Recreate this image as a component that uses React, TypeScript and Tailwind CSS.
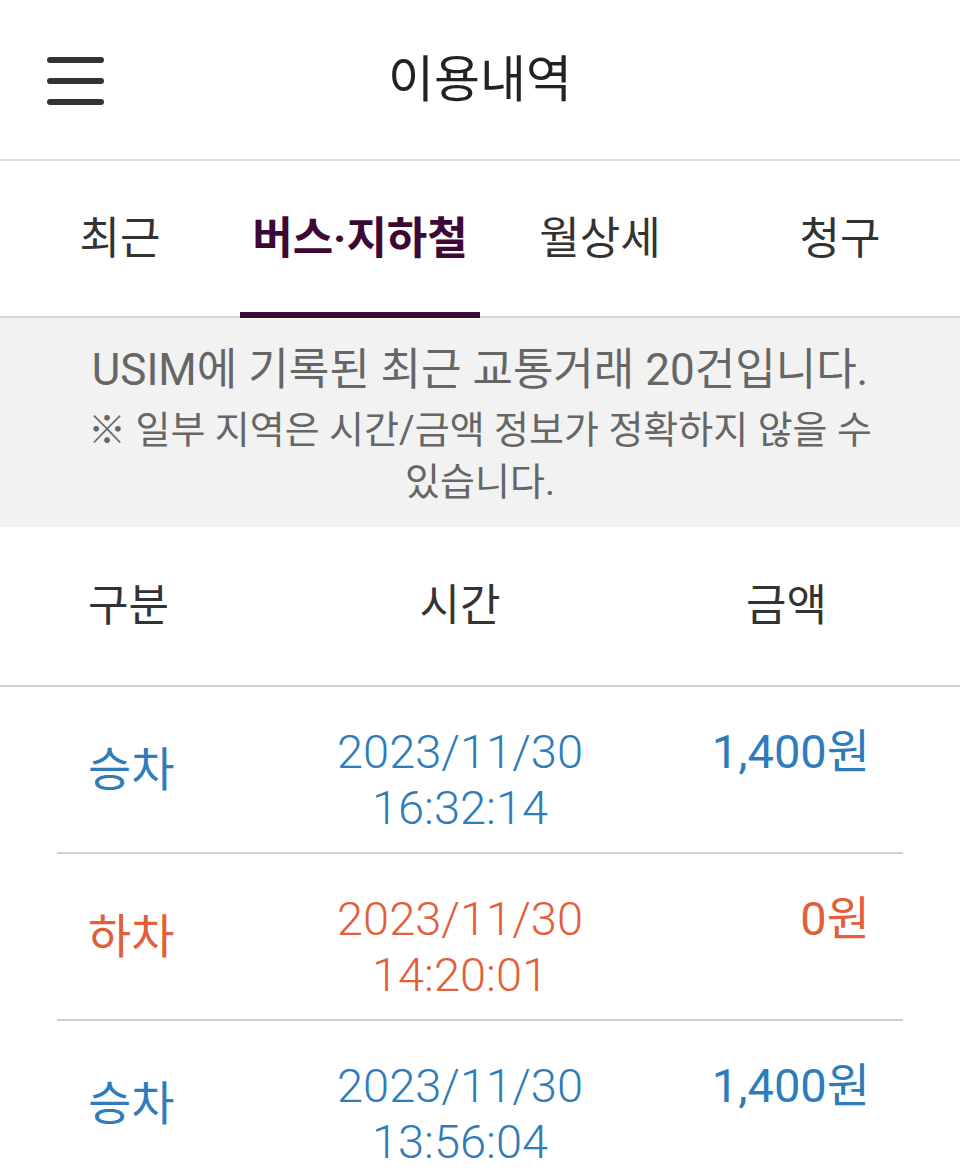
import React from "react";

type Ride = {
    kind: string;
    date: string;
    time: string;
    amount: string;
    tone: "board" | "alight";
};

const rides: Ride[] = [
    { kind: "승차", date: "2023/11/30", time: "16:32:14", amount: "1,400원", tone: "board" },
    { kind: "하차", date: "2023/11/30", time: "14:20:01", amount: "0원", tone: "alight" },
    { kind: "승차", date: "2023/11/30", time: "13:56:04", amount: "1,400원", tone: "board" },
];

const tabs = ["최근", "버스·지하철", "월상세", "청구"];

function Header() {
    return (
        <header className="relative flex h-[161px] items-center justify-center border-b-2 border-[#dcdcdc]">
            <button className="absolute left-[47px] top-[57px] flex w-[57px] flex-col gap-[15px]">
                <span className="h-[6px] w-full rounded-full bg-[#333]" />
                <span className="h-[6px] w-full rounded-full bg-[#333]" />
                <span className="h-[6px] w-full rounded-full bg-[#333]" />
            </button>
            <h1 className="text-[50px] leading-none text-[#222]">이용내역</h1>
        </header>
    );
}

function Tabs() {
    return (
        <nav className="grid h-[157px] grid-cols-4 border-b-2 border-[#d4d4d4]">
            {tabs.map((tab, i) => (
                <div key={tab} className="relative flex items-center justify-center">
                    <span
                        className={
                            i === 1
                                ? "text-[44px] font-bold text-[#3d0836]"
                                : "text-[44px] text-[#333]"
                        }
                    >
                        {tab}
                    </span>
                    {i === 1 && <span className="absolute bottom-[-2px] left-0 h-[6px] w-full bg-[#3d0836]" />}
                </div>
            ))}
        </nav>
    );
}

function Notice() {
    return (
        <section className="h-[209px] bg-[#f2f2f2] pt-[25px] text-center text-[#666]">
            <p className="text-[44px] leading-[54px]">USIM에 기록된 최근 교통거래 20건입니다.</p>
            <p className="mt-[7px] text-[38px] leading-[52px]">
                ※ 일부 지역은 시간/금액 정보가 정확하지 않을 수
                <br />
                있습니다.
            </p>
        </section>
    );
}

function Row({ ride, last }: { ride: Ride; last: boolean }) {
    const color = ride.tone === "board" ? "text-[#2f7cba]" : "text-[#e25f3a]";
    return (
        <div className={last ? "" : "mx-[57px] border-b-2 border-[#d0d0d0]"}>
            <div className={`flex h-[165px] items-start pt-[37px] text-[47px] ${color} ${last ? "" : "-mx-[57px]"}`}>
                <div className="mt-[22px] w-[260px] pl-[88px] leading-none">{ride.kind}</div>
                <div className="w-[400px] text-center font-light leading-[56px]">
                    <div>{ride.date}</div>
                    <div>{ride.time}</div>
                </div>
                <div className="flex-1 pr-[90px] text-right leading-[56px]">{ride.amount}</div>
            </div>
        </div>
    );
}

export default function App() {
    return (
        <div className="h-[1171px] w-[960px] overflow-hidden bg-white font-[Roboto,'Noto_Sans_CJK_KR',sans-serif]">
            <Header />
            <Tabs />
            <Notice />
            <div className="flex h-[160px] items-center border-b-2 border-[#d0d0d0] text-[44px] text-[#333]">
                <div className="w-[260px] pl-[88px]">구분</div>
                <div className="w-[400px] text-center">시간</div>
                <div className="flex-1 pr-[133px] text-right">금액</div>
            </div>
            {rides.map((ride, i) => (
                <Row key={i} ride={ride} last={i === rides.length - 1} />
            ))}
        </div>
    );
}
